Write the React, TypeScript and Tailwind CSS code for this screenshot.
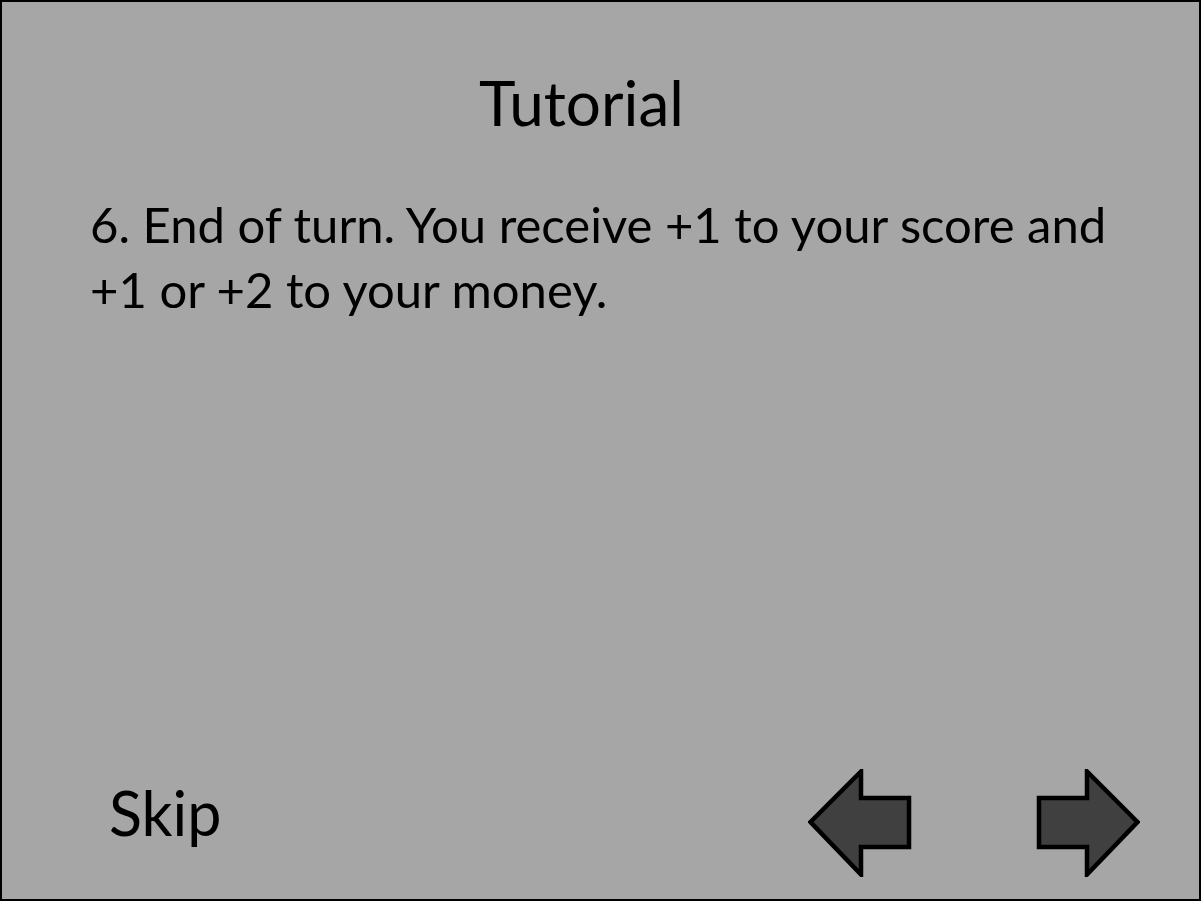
import React from "react";

function Arrow({ dir }: { dir: "left" | "right" }) {
  const pts =
    dir === "left"
      ? "2.5,53 53,2.5 53,29 101,29 101,78 53,78 53,105.5"
      : "101.5,53 51,2.5 51,29 3,29 3,78 51,78 51,105.5";
  return (
    <svg width="104" height="108" viewBox="0 0 104 108" className="block">
      <polygon points={pts} fill="#404040" stroke="#000" strokeWidth="4.5" strokeLinejoin="miter" />
    </svg>
  );
}

export default function App() {
  return (
    <div
      className="w-[1201px] h-[901px] border-2 border-black bg-[#a6a6a6] flex flex-col text-black"
      style={{ fontFamily: "Lato, 'Open Sans', sans-serif" }}
    >
      <div className="pt-[65px] text-center text-[62px] leading-[70px] pr-[38px]">Tutorial</div>
      <div className="pl-[88px] pr-[60px] pt-[55px] text-[49px] leading-[65px]">
        6. End of turn. You receive +1 to your score and +1 or +2 to your money.
      </div>
      <div className="flex-1" />
      <div className="flex items-start pb-[22px] pl-[107px] pr-[59px]">
        <div className="text-[61px] leading-[64px] mt-[12px]">Skip</div>
        <div className="flex-1" />
        <Arrow dir="left" />
        <div className="w-[124px]" />
        <Arrow dir="right" />
      </div>
    </div>
  );
}
